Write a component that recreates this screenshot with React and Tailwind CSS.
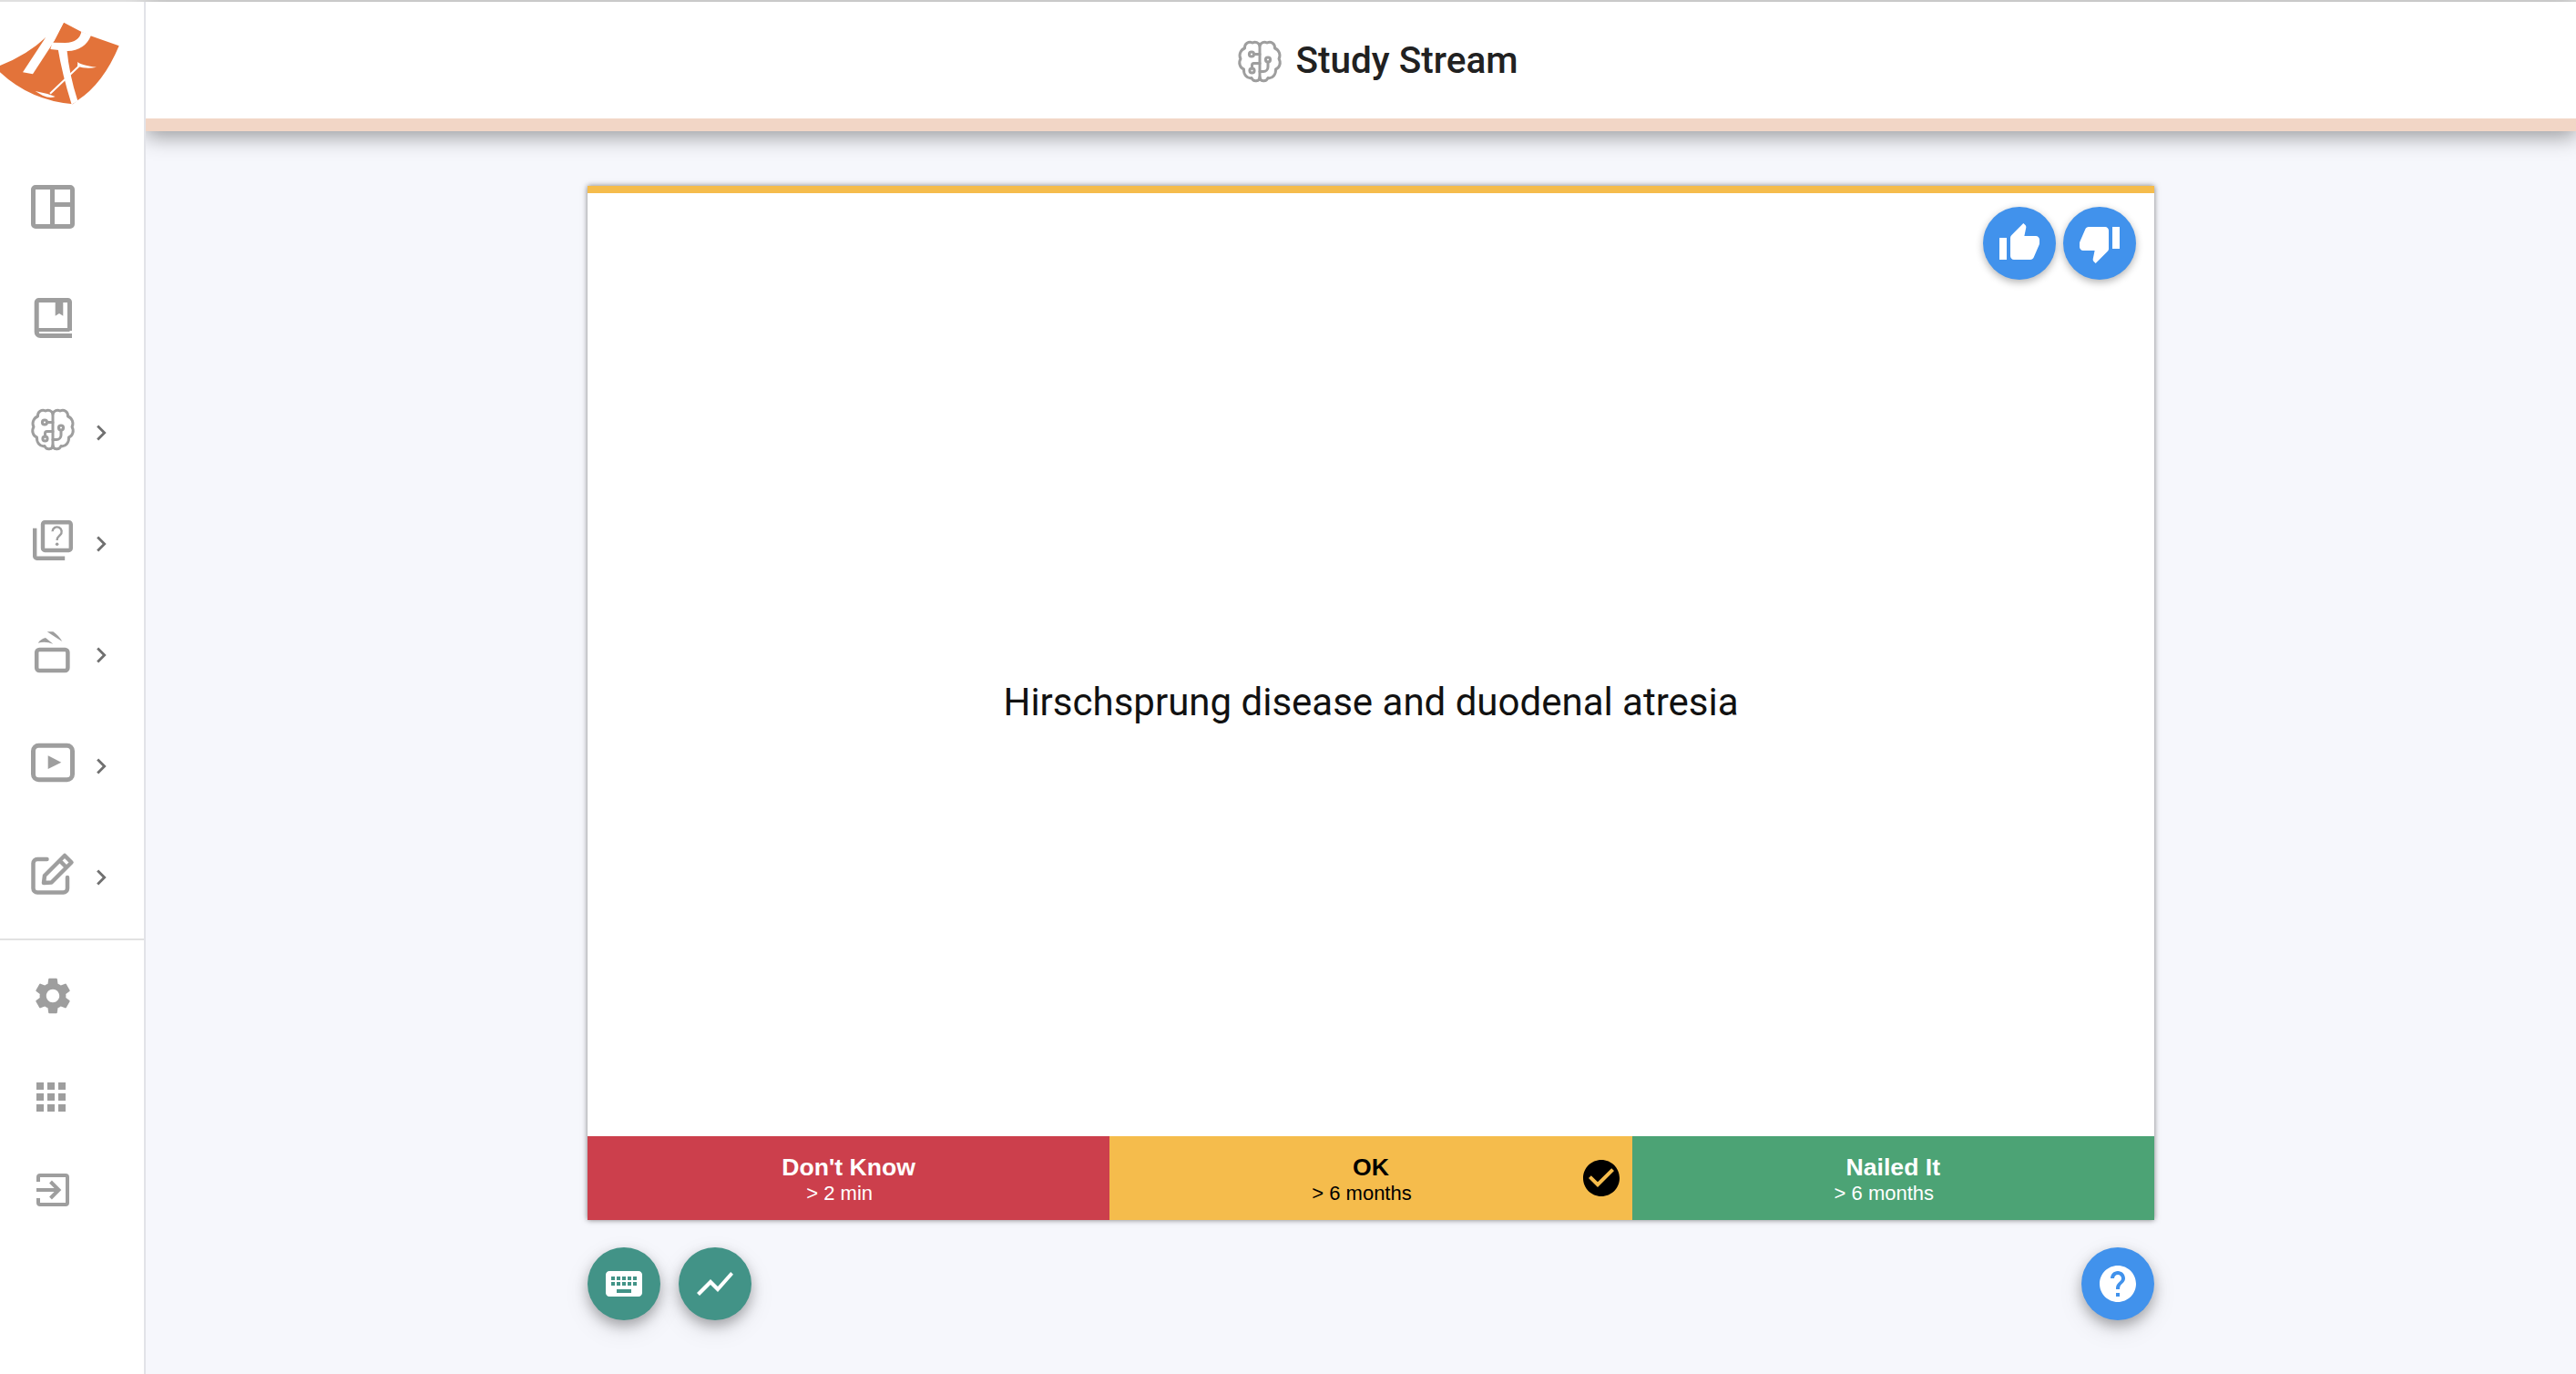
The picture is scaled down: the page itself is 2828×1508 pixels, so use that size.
import { MdSettings, MdApps, MdThumbUp, MdThumbDown, MdKeyboard, MdShowChart, MdHelp, MdCheckCircle, MdNavigateNext } from 'react-icons/md'

function Logo() {
  return (
    <svg viewBox="0 0 510 390" className="h-[130px] w-[170px]">
      <path d="M0 210 Q90 175 150 118 L178 130 L210 68 L270 100 L298 112 L392 145 Q340 270 255 325 L240 337 Q100 325 0 232 Z" fill="#e3733a" />
      <path d="M150 118 L75 232 L108 238 L175 135 L212 62 L190 60 Z" fill="#fff" />
      <path d="M268 98 Q262 132 215 135 L172 134 L166 156 L222 162 Q280 160 300 110 Z" fill="#fff" />
      <path d="M190 150 Q205 240 236 338 L256 326 Q228 240 220 155 Z" fill="#fff" />
      <path d="M165 302 L265 207" stroke="#fff" strokeWidth="6" fill="none" />
      <path d="M256 197 Q262 208 318 215 Q285 222 255 212 Z M116 294 Q150 300 182 312 Q165 320 140 308 Z" fill="#fff" />
    </svg>
  )
}

const stroke = { fill: 'none', stroke: 'currentColor' }

function BrainIcon({ className }) {
  return (
    <svg viewBox="0 -1.5 64 64" className={className} {...stroke} strokeWidth="3" strokeLinecap="round" strokeLinejoin="round">
      <path d="M32 14 C31 10 27 9 24 10.5 C20 8.5 15 11 15.5 16.5 C11 18 8.5 24 11 28 C8.5 32 10 38 14.5 39.5 C14 45 18 50 23 49 C25 54 32 53 32 48 V14" />
      <path d="M32 14 C33 10 37 9 40 10.5 C44 8.5 49 11 48.5 16.5 C53 18 55.5 24 53 28 C55.5 32 54 38 49.5 39.5 C50 45 46 50 41 49 C39 54 32 53 32 48" />
      <circle cx="23" cy="23" r="2.6" />
      <circle cx="23.5" cy="41" r="2.6" />
      <circle cx="41" cy="29" r="2.6" />
      <path d="M25.6 23 H32 M23.5 38.4 V35 a2 2 0 0 1 2-2 H32 M41 31.6 V37 a5 5 0 0 1 -5 5 H32" />
    </svg>
  )
}

function DashIcon() {
  return (
    <svg viewBox="0 0 64 64" className="h-16 w-16" {...stroke} strokeWidth="5">
      <rect x="10.5" y="10.5" width="43" height="43" rx="2.5" />
      <path d="M31.5 10 V54 M31.5 29.5 H54" />
    </svg>
  )
}

function BookIcon() {
  return (
    <svg viewBox="0 0 64 64" className="h-16 w-16" {...stroke} strokeWidth="5">
      <path d="M50.5 46 V14.5 a2 2 0 0 0 -2 -2 H16.7 a2.5 2.5 0 0 0 -2.5 2.5 V47.5 a4 4 0 0 0 4 4 H53" />
      <path d="M14.2 47 a4 4 0 0 1 4 -2 H50.5" strokeWidth="4" />
      <path d="M34.7 12 H43.3 V29.7 L39 27 L34.7 29.7 Z" fill="currentColor" stroke="none" />
    </svg>
  )
}

function QuizIcon() {
  return (
    <svg viewBox="-2.55 -2.55 29.1 29.1" className="h-16 w-16" fill="currentColor">
      <path d="M4 6H2v14c0 1.1.9 2 2 2h14v-2H4V6zm16-4H8c-1.1 0-2 .9-2 2v12c0 1.1.9 2 2 2h12c1.1 0 2-.9 2-2V4c0-1.1-.9-2-2-2zm0 14H8V4h12v12z" />
      <path d="M11.8 7.6 a2.3 2.3 0 1 1 3.8 1.8 c-.9 .8 -1.5 1.2 -1.5 2.6" fill="none" stroke="currentColor" strokeWidth="1.1" />
      <circle cx="14.1" cy="13.9" r=".8" />
    </svg>
  )
}

function SlidesIcon() {
  return (
    <svg viewBox="0 0 64 64" className="h-16 w-16" fill="currentColor">
      <rect x="14.2" y="30" width="34.2" height="23" rx="3" fill="none" stroke="currentColor" strokeWidth="4.5" />
      <path d="M15.7 22.7 Q19 18 24 17 L32.3 23.7 Q24 20.5 15.7 22.7 Z" />
      <path d="M25.7 10.3 L32.3 10.3 Q38 14 42.3 21 Q34 16 25.7 10.3 Z" />
    </svg>
  )
}

function PlayIcon() {
  return (
    <svg viewBox="0 0 64 64" className="h-16 w-16" {...stroke} strokeWidth="5">
      <rect x="10.5" y="13.2" width="43" height="37.6" rx="6" />
      <polygon points="26.7,24.3 41.3,31.7 26.7,39" fill="currentColor" stroke="none" />
    </svg>
  )
}

function EditIcon() {
  return (
    <svg viewBox="0 0 64 64" className="h-16 w-16" {...stroke} strokeWidth="4.5" strokeLinejoin="round" strokeLinecap="round">
      <path d="M25.5 16 H15 a4.5 4.5 0 0 0 -4.5 4.5 V48 a4.5 4.5 0 0 0 4.5 4.5 H43.5 a4.5 4.5 0 0 0 4.5 -4.5 V36" />
      <path d="M22 42 L23 34 L45 12 L52.5 19.5 L30.5 41.5 Z M39.5 17.5 L47 25" />
    </svg>
  )
}

function ExitIcon() {
  return (
    <svg viewBox="0 0 64 64" className="h-16 w-16" {...stroke} strokeWidth="4">
      <path d="M16 23 V18 a2 2 0 0 1 2-2 H46 a2 2 0 0 1 2 2 V46 a2 2 0 0 1 -2 2 H18 a2 2 0 0 1 -2 -2 V41" />
      <path d="M14 32 H38 M29.5 23 L38.5 32 L29.5 41" />
    </svg>
  )
}

function Row({ height = 'h-[122px]', chevron, children }) {
  return (
    <div className={`flex items-center pl-[26px] text-[#9e9e9e] ${height}`}>
      <div className="flex h-16 w-16 items-center justify-center">{children}</div>
      {chevron && <MdNavigateNext size={34} className="ml-[4px] mt-2 text-[#707070]" />}
    </div>
  )
}

function Sidebar() {
  return (
    <aside className="relative z-10 flex h-full w-40 shrink-0 flex-col border-r-2 border-[#e2e3e8] bg-white">
      <div className="h-[164px]"><Logo /></div>
      <Row><DashIcon /></Row>
      <Row><BookIcon /></Row>
      <Row chevron><BrainIcon className="h-16 w-16" /></Row>
      <Row chevron><QuizIcon /></Row>
      <Row chevron><SlidesIcon /></Row>
      <Row chevron><PlayIcon /></Row>
      <Row chevron><EditIcon /></Row>
      <div className="mt-[10px] h-[2px] bg-[#e2e2e2]" />
      <div className="flex h-[122px] items-center pl-[26px] text-[#9e9e9e]">
        <div className="flex h-16 w-16 items-center justify-center"><MdSettings size={48} /></div>
      </div>
      <div className="flex h-[100px] items-center pl-[24px] text-[#9e9e9e]">
        <div className="flex h-16 w-16 items-center justify-center"><MdApps size={48} /></div>
      </div>
      <div className="flex h-[104px] items-center pl-[26px] text-[#9e9e9e]">
        <ExitIcon />
      </div>
    </aside>
  )
}

function Fab({ color, size = 48, icon: Icon, shadow = 'shadow-[0_6px_14px_rgba(0,0,0,0.28),0_10px_28px_rgba(0,0,0,0.10)]' }) {
  return (
    <button className={`flex h-20 w-20 items-center justify-center rounded-full text-white ${color} ${shadow}`}>
      <Icon size={size} />
    </button>
  )
}

function Choice({ bg, text, title, sub, checked }) {
  return (
    <div className={`relative flex flex-1 flex-col items-center justify-center pt-[1px] ${bg} ${text}`}>
      <div className="mb-[1px] text-[26.6px] font-bold leading-[32px]">{title}</div>
      <div className="mr-5 text-[22px] leading-[24px]">{sub}</div>
      {checked && <MdCheckCircle size={48} className="absolute right-[10px] top-[22px] text-black" />}
    </div>
  )
}

export default function App() {
  return (
    <div className="flex h-screen flex-col overflow-hidden bg-[#f6f7fc] font-['Liberation_Sans',sans-serif]">
      <div className="h-[2px] shrink-0 bg-[#e0e0e0]" />
      <div className="flex min-h-0 flex-1">
        <Sidebar />
        <main className="min-w-0 flex-1">
          <header className="relative flex h-[142px] items-start border-b-[14px] border-[#f2d6c6] bg-white pl-[30px] shadow-[0_6px_22px_rgba(0,0,0,0.38)]">
            <div className="flex h-[128px] w-full items-center justify-center pt-[1px]">
              <BrainIcon className="h-16 w-16 text-[#9e9e9e]" />
              <h1 className="ml-[7px] font-['Roboto',sans-serif] text-[40.5px] font-medium text-[#212121]">Study Stream</h1>
            </div>
          </header>
          <div className="ml-[485px] w-[1720px] pt-[60px]">
            <section className="relative flex h-[1135px] flex-col border-t-8 border-[#f5bc4c] bg-white shadow-[0_0_6px_rgba(0,0,0,0.5)]">
              <div className="absolute right-5 top-[15px] flex gap-2">
                <Fab color="bg-[#4192ec]" icon={MdThumbUp} shadow="shadow-[0_3px_8px_rgba(0,0,0,0.3)]" />
                <Fab color="bg-[#4192ec]" icon={MdThumbDown} shadow="shadow-[0_3px_8px_rgba(0,0,0,0.3)]" />
              </div>
              <div className="flex flex-1 items-center justify-center pt-[82px] font-['Roboto',sans-serif] text-[42px] text-[#111]">
                Hirschsprung disease and duodenal atresia
              </div>
              <div className="flex h-[92px]">
                <Choice bg="bg-[#cc3f4c]" text="text-white" title="Don't Know" sub="> 2 min" />
                <Choice bg="bg-[#f5bc4c]" text="text-black" title="OK" sub="> 6 months" checked />
                <Choice bg="bg-[#4ca375]" text="text-white" title="Nailed It" sub="> 6 months" />
              </div>
            </section>
            <div className="mt-[30px] flex justify-between">
              <div className="flex gap-5">
                <Fab color="bg-[#429387]" icon={MdKeyboard} />
                <Fab color="bg-[#429387]" icon={MdShowChart} />
              </div>
              <Fab color="bg-[#4192ec]" icon={MdHelp} />
            </div>
          </div>
        </main>
      </div>
    </div>
  )
}
